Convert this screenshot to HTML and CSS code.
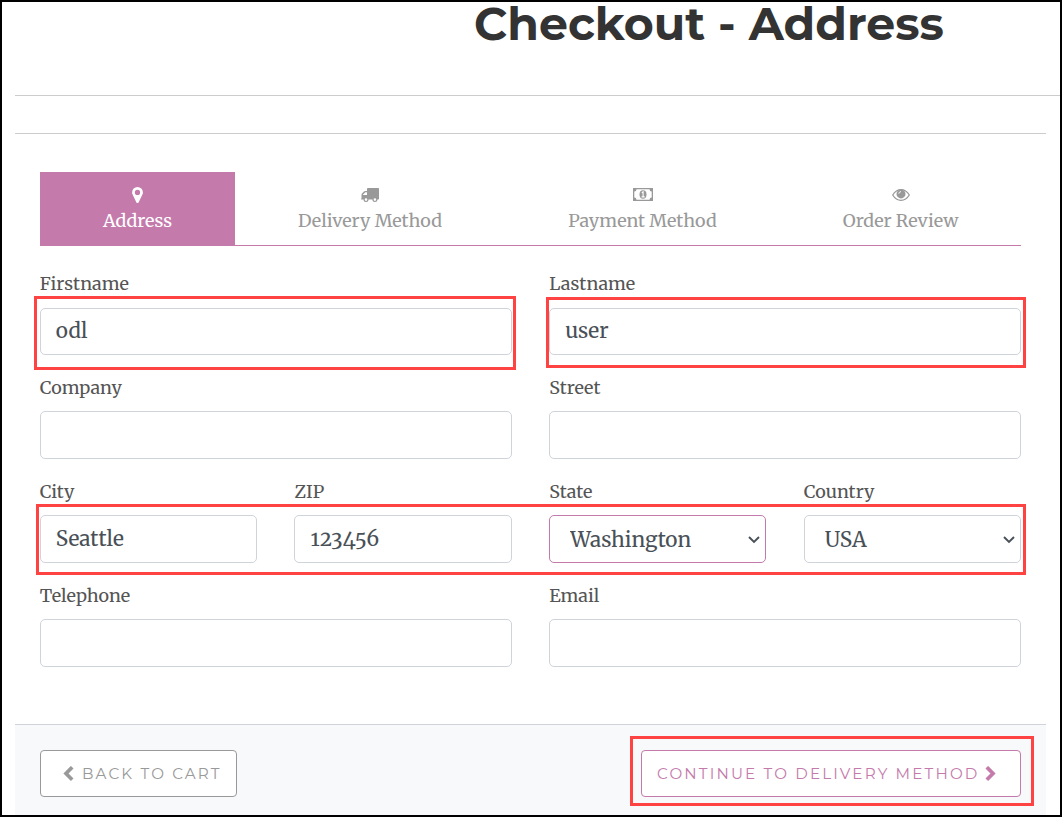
FILE: index.html
```html
<!DOCTYPE html>
<html lang="en">
<head>
<meta charset="utf-8">
<title>Checkout - Address</title>
<link rel="stylesheet" href="styles.css">
</head>
<body>
<div class="page">
  <header class="page-head"><h1 class="title">Checkout - Address</h1></header>
  <main class="checkout">
    <nav class="steps">
      <a class="step step-address active">
        <svg class="icon" width="12" height="16" viewBox="0 0 12 16"><path fill="currentColor" fill-rule="evenodd" d="M5.500 0a5.400 5.400 0 0 1 5.400 5.400c0 .9-.2 1.600-.5 2.200L6.700 15.300a1.300 1.300 0 0 1-2.400 0L.6 7.600C.3 7 .1 6.300.1 5.400A5.400 5.400 0 0 1 5.500 0zm0 2.800a2.600 2.600 0 1 0 0 5.200 2.600 2.600 0 0 0 0-5.200z"/></svg>
        <span>Address</span>
      </a>
      <a class="step step-delivery">
        <svg class="icon" width="18" height="16" viewBox="0 0 18 16"><path fill="currentColor" fill-rule="evenodd" d="M7 1h10.300q.7 0 .7.700v10.100q0 .8-1 .8h-.6a2.500 2.500 0 0 1-5 0H7.500a2.500 2.500 0 0 1-5 0H.7q-.7 0-.7-.7l.5-.7V7.700q0-.7.500-1.200l2-2q.5-.5 1.200-.5H6V1.700Q6 1 7 1zM6 5.300H4.400L1.900 7.700V8H6zM5 11.300a1.300 1.300 0 1 0 0 2.600 1.300 1.300 0 0 0 0-2.600zm8.900 0a1.300 1.300 0 1 0 0 2.600 1.300 1.300 0 0 0 0-2.600z"/></svg>
        <span>Delivery Method</span>
      </a>
      <a class="step step-payment">
        <svg class="icon" width="20" height="16" viewBox="0 0 20 16"><path fill="currentColor" fill-rule="evenodd" d="M0 1h20v13H0zM3.500 2.300A2.200 2.200 0 0 1 1.300 4.500v6A2.200 2.200 0 0 1 3.500 12.700h13a2.200 2.200 0 0 1 2.200-2.200v-6A2.200 2.200 0 0 1 16.500 2.300z"/><ellipse cx="10" cy="7.500" rx="3.500" ry="4.200" fill="currentColor"/><path d="M8.800 5.700l1.300-.9v5M8.500 9.900h3.200" fill="none" stroke="#fff" stroke-width="1.100"/></svg>
        <span>Payment Method</span>
      </a>
      <a class="step step-review">
        <svg class="icon" width="18" height="16" viewBox="0 0 18 16"><path fill="none" stroke="currentColor" stroke-width="1.300" d="M.7 8Q4 2.700 9 2.700T17.300 8Q14 13.300 9 13.300T.7 8z"/><circle cx="9" cy="6.900" r="4.500" fill="currentColor"/><path fill="none" stroke="#fff" stroke-width=".9" stroke-linecap="round" d="M6.800 6.300Q7 4.700 8.600 4.600"/></svg>
        <span>Order Review</span>
      </a>
    </nav>
    <form class="fields">
      <label class="field wide"><span class="label">Firstname</span><input class="control" value="odl"></label>
      <label class="field wide"><span class="label">Lastname</span><input class="control" value="user"></label>
      <label class="field wide"><span class="label">Company</span><input class="control"></label>
      <label class="field wide"><span class="label">Street</span><input class="control"></label>
      <label class="field"><span class="label">City</span><input class="control" value="Seattle"></label>
      <label class="field"><span class="label">ZIP</span><input class="control zip" value="123456"></label>
      <label class="field"><span class="label">State</span><select class="control select focused"><option>Washington</option></select><svg class="caret" width="12" height="8" viewBox="0 0 12 8"><path d="M1 1l5 5 5-5" fill="none" stroke="currentColor" stroke-width="1.900"/></svg></label>
      <label class="field"><span class="label">Country</span><select class="control select"><option>USA</option></select><svg class="caret" width="12" height="8" viewBox="0 0 12 8"><path d="M1 1l5 5 5-5" fill="none" stroke="currentColor" stroke-width="1.900"/></svg></label>
      <label class="field wide"><span class="label">Telephone</span><input class="control"></label>
      <label class="field wide"><span class="label">Email</span><input class="control"></label>
    </form>
    <footer class="actions">
      <a class="btn btn-back"><svg width="11" height="16" viewBox="0 0 11 16"><path d="M9.200 1.200L3 7.500l6.200 6.300" fill="none" stroke="currentColor" stroke-width="3.700"/></svg><span>BACK TO CART</span></a>
      <a class="btn btn-next"><span>CONTINUE TO DELIVERY METHOD</span><svg width="11" height="16" viewBox="0 0 11 16"><path d="M1.800 1.200L8 7.500l-6.200 6.300" fill="none" stroke="currentColor" stroke-width="3.700"/></svg></a>
    </footer>
  </main>
  <div class="mark mark-first"></div>
  <div class="mark mark-last"></div>
  <div class="mark mark-location"></div>
  <div class="mark mark-next"></div>
</div>
</body>
</html>
```
FILE: styles.css
```css
* { box-sizing: border-box; }
body { margin: 0; font-family: Merriweather, "DejaVu Serif Condensed", "DejaVu Serif", serif; font-feature-settings: "onum"; color: #555; }
.page { position: relative; width: 1062px; height: 817px; border: 2px solid #000; background: #fff; overflow: hidden; padding-left: 13px; }
.page-head { height: 94px; border-bottom: 1px solid #ccc; padding-left: 459px; }
.title { margin: 0; font: 700 45.800px/44px Montserrat, Inter, sans-serif; color: #333; white-space: nowrap; }
.checkout { width: 1031px; margin-top: 37px; border-top: 1px solid #ccc; }
.steps { display: flex; margin: 38px 25px 0; height: 74px; border-bottom: 1px solid #c47aab; }
.step { display: flex; flex-direction: column; align-items: center; padding-top: 15px; gap: 4px; font-size: 17.950px; line-height: 27px; color: #999; white-space: nowrap; }
.step-address { width: 195px; }
.step-delivery { width: 270px; }
.step-payment { width: 275px; }
.step-review { width: 241px; }
.step.active { background: #c47aab; color: #fff; }
.icon { display: block; flex: none; }
.fields { display: grid; grid-template-columns: repeat(4, 1fr); column-gap: 37.5px; grid-auto-rows: 103.9px; margin: 0 25px 0 24.800px; padding-top: 24px; height: 478px; }
.field { position: relative; display: flex; flex-direction: column; min-width: 0; }
.wide { grid-column: span 2; }
.label { font-size: 17.950px; line-height: 27px; margin-bottom: 10.500px; }
.control { width: 100%; height: 47.600px; padding: 0 15px 1px; border: 1px solid #ced4da; border-radius: 5px; background: #fff; color: #495057; font: 400 20.750px/30px Merriweather, "DejaVu Serif Condensed", "DejaVu Serif", serif; font-feature-settings: "onum"; outline: none; }
.zip { letter-spacing: .5px; }
.select { appearance: none; padding: 1px 20px 0; }
.focused { border-color: #c47aab; }
.caret { position: absolute; right: 6px; top: 58px; color: #495057; }
.actions { display: flex; justify-content: space-between; align-items: flex-start; height: 91px; padding: 25px 25px 0; border-top: 1px solid #ced4da; background: #f8f9fb; }
.btn { display: flex; align-items: center; height: 47px; border: 1px solid; border-radius: 4px; background: #fff; font: 400 15.200px/24px Montserrat, Inter, sans-serif; letter-spacing: 2.150px; white-space: nowrap; }
.btn-back { width: 197px; padding-left: 22px; gap: 8px; color: #999; }
.btn-next { width: 380px; padding-left: 15px; gap: 5px; color: #c47aab; }
.mark { position: absolute; border: 3px solid #ff4343; }
.mark-first { left: 32px; top: 294px; width: 482px; height: 74px; }
.mark-last { left: 544px; top: 295px; width: 480px; height: 71px; }
.mark-location { left: 34px; top: 502px; width: 990px; height: 71px; }
.mark-next { left: 628px; top: 734px; width: 404px; height: 70px; }
```
